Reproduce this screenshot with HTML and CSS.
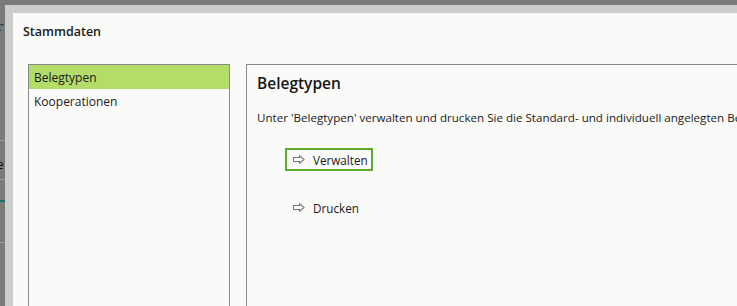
FILE: index.html
```html
<!DOCTYPE html>
<html lang="de">
<head>
  <meta charset="UTF-8">
  <title>Stammdaten</title>
  <link rel="stylesheet" href="styles.css">
</head>
<body>
  <div class="backdrop">
    <div class="strip">
      <span class="frag frag-r">r</span>
      <span class="frag frag-e">e</span>
      <div class="line line-a"></div>
      <div class="line line-b"></div>
      <div class="line teal"></div>
      <div class="line line-c"></div>
    </div>
    <div class="frame">
      <div class="dialog">
        <div class="dialog-title">Stammdaten</div>
        <div class="dialog-body">
          <ul class="nav-list">
            <li class="nav-item active">Belegtypen</li>
            <li class="nav-item">Kooperationen</li>
          </ul>
          <div class="panel">
            <h2 class="panel-title">Belegtypen</h2>
            <p class="panel-text">Unter 'Belegtypen' verwalten und drucken Sie die Standard- und individuell angelegten Belegtypen.</p>
            <div class="actions">
              <a class="action focused">
                <svg class="arrow" width="12" height="9" viewBox="0 0 12 9"><path d="M0.5 2.5 H6.5 V0.8 L11 4.5 L6.5 8.2 V6.5 H0.5 Z" fill="#fff" stroke="#747474" stroke-width="1.1"/></svg>
                Verwalten
              </a>
              <a class="action">
                <svg class="arrow" width="12" height="9" viewBox="0 0 12 9"><path d="M0.5 2.5 H6.5 V0.8 L11 4.5 L6.5 8.2 V6.5 H0.5 Z" fill="#fff" stroke="#747474" stroke-width="1.1"/></svg>
                Drucken
              </a>
            </div>
          </div>
        </div>
      </div>
    </div>
  </div>
</body>
</html>
```

FILE: styles.css
```css
html, body { margin: 0; height: 100%; overflow: hidden; }
body { background: #7a7a78; font-family: "Open Sans", "Noto Sans", sans-serif; color: #1a1a1a; }

.backdrop { display: flex; height: 100%; padding-top: 5px; box-sizing: border-box; }
.strip { width: 5px; flex: none; margin-top: -5px; overflow: hidden; display: flex; flex-direction: column; font-size: 13px; color: #111; }
.frag { display: block; line-height: 14px; }
.frag-r { margin-top: 20px; font-family: "DejaVu Serif", serif; color: #1a3a4a; margin-left: -3px; }
.frag-e { margin-top: 124px; margin-left: -3px; font-size: 12px; }
.line { height: 1px; background: #9a9a98; }
.line-a { margin-top: -32px; }
.line-b { margin-top: 38px; }
.teal { height: 2px; background: #1e6b66; margin-top: 20px; }
.line-c { margin-top: 40px; }

.frame { flex: 1; min-width: 0; background: #cccccb; padding: 8px 0 0 8px; }
.dialog { background: #fafaf8; height: 100%; display: flex; flex-direction: column; overflow: hidden; }
.dialog-title { padding: 10px 0 0 10px; font-size: 12.5px; font-weight: 600; line-height: 18px; color: #1b1b1b; }

.dialog-body { display: flex; gap: 16px; padding: 23px 0 0 15px; flex: 1; min-width: 0; }
.nav-list { list-style: none; margin: 0; padding: 0; width: 200px; border: 1px solid #8a8a8a; border-bottom: none; flex: none; }
.nav-item { height: 24px; line-height: 25px; padding-left: 5px; font-size: 12px; }
.nav-item.active { background: #b4dc69; }

.panel { flex: 1; min-width: 0; border: 1px solid #8a8a8a; border-right: none; border-bottom: none; padding: 0 0 0 10px; overflow: hidden; }
.panel-title { margin: 7px 0 0; font-size: 15.5px; font-weight: 600; line-height: 22px; color: #161616; }
.panel-text { margin: 16px 0 0; font-size: 11.6px; line-height: 16px; white-space: nowrap; }

.actions { display: flex; flex-direction: column; align-items: flex-start; gap: 25px; margin: 22px 0 0 28px; }
.action { display: flex; align-items: center; gap: 8px; height: 19px; padding: 0 3px 0 6px; border: 2px solid transparent; font-size: 11.7px; color: #1a1a1a; }
.action.focused { border-color: #5eab2c; }
.arrow { flex: none; }
```
